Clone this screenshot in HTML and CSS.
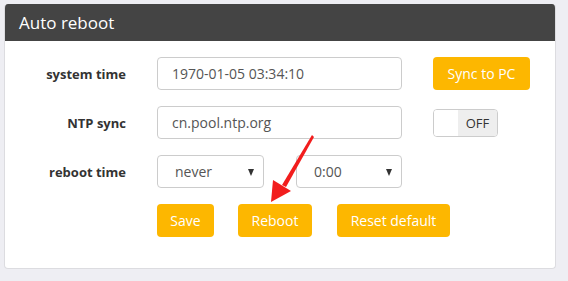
FILE: index.html
```html
<!DOCTYPE html>
<html lang="en">
<head>
  <meta charset="UTF-8" />
  <title>Auto reboot</title>
  <link rel="stylesheet" href="styles.css">
</head>
<body>
  <div class="panel">
    <div class="panel-head">Auto reboot</div>
    <div class="panel-body">
      <div class="form-row">
        <label class="lbl">system time</label>
        <input class="field wide" type="text" value="1970-01-05 03:34:10">
        <button class="btn btn-sync">Sync to PC</button>
      </div>
      <div class="form-row">
        <label class="lbl">NTP sync</label>
        <input class="field wide" type="text" value="cn.pool.ntp.org">
        <div class="toggle">
          <span class="knob"></span>
          <span class="state">OFF</span>
        </div>
      </div>
      <div class="form-row">
        <label class="lbl">reboot time</label>
        <div class="sel sel-day"><span>never</span></div>
        <div class="sel sel-hour"><span>0:00</span></div>
      </div>
      <div class="form-row actions">
        <span class="lbl"></span>
        <div class="btn-group">
          <button class="btn btn-save">Save</button>
          <button class="btn btn-reboot">Reboot</button>
          <button class="btn btn-reset">Reset default</button>
        </div>
      </div>
    </div>
  </div>

  <svg class="arrow" width="568" height="281" viewBox="0 0 568 281">
    <polygon points="312,135 314,137 286,187 282,185" fill="#f21d1d" />
    <polygon points="271,202 273,180 291,191" fill="#f21d1d" />
  </svg>
</body>
</html>
```

FILE: styles.css
```css
html, body {
  margin: 0;
  padding: 0;
  height: 100%;
  background: #eeeef3;
  font-family: "Open Sans", "Noto Sans", sans-serif;
}

body {
  padding: 4px;
  box-sizing: border-box;
}

.panel {
  width: 552px;
  background: white;
  border: 1px solid #dcdce0;
  border-top: none;
  border-radius: 4px;
  box-sizing: border-box;
  overflow: hidden;
}

.panel-head {
  height: 37px;
  background: #444;
  color: white;
  font-size: 17px;
  line-height: 37px;
  padding-left: 14px;
}

.panel-body {
  padding: 16px 0 31px 0;
  display: flex;
  flex-direction: column;
  gap: 16px;
}

.form-row {
  display: flex;
  align-items: center;
  height: 33px;
}

.lbl {
  width: 121px;
  margin-right: 31px;
  text-align: right;
  font-size: 13px;
  font-weight: bold;
  color: #333;
}

.field {
  height: 33px;
  box-sizing: border-box;
  border: 1px solid #ccc;
  border-radius: 4px;
  padding: 0 14px;
  font-family: inherit;
  font-size: 14px;
  color: #555;
  outline: none;
}

.field.wide {
  width: 245px;
  margin-right: 31px;
}

.btn {
  height: 33px;
  border: none;
  border-radius: 4px;
  background: #fdb700;
  color: white;
  font-family: inherit;
  font-size: 14px;
  padding: 0;
  cursor: pointer;
}

.btn-sync { width: 97px; }
.btn-save { width: 57px; }
.btn-reboot { width: 74px; }
.btn-reset { width: 113px; margin-left: 1px; }

.btn-group {
  display: flex;
  gap: 24px;
}

.toggle {
  display: flex;
  width: 65px;
  height: 28px;
  border: 1px solid #ccc;
  border-radius: 4px;
  box-sizing: border-box;
  overflow: hidden;
}

.toggle .knob {
  width: 24px;
  background: white;
}

.toggle .state {
  flex: 1;
  background: #eee;
  font-size: 13px;
  color: #333;
  text-align: center;
  line-height: 26px;
}

.sel {
  position: relative;
  height: 33px;
  box-sizing: border-box;
  border: 1px solid #ccc;
  border-radius: 4px;
  font-size: 14px;
  color: #555;
  line-height: 31px;
  padding-left: 17px;
}

.sel::after {
  content: "";
  position: absolute;
  right: 9px;
  top: 13px;
  border-left: 3.5px solid transparent;
  border-right: 3.5px solid transparent;
  border-top: 7px solid #333;
}

.sel-day {
  width: 107px;
  margin-right: 32px;
}

.sel-hour {
  width: 106px;
}

.arrow {
  position: absolute;
  top: 0;
  left: 0;
  pointer-events: none;
}
```
